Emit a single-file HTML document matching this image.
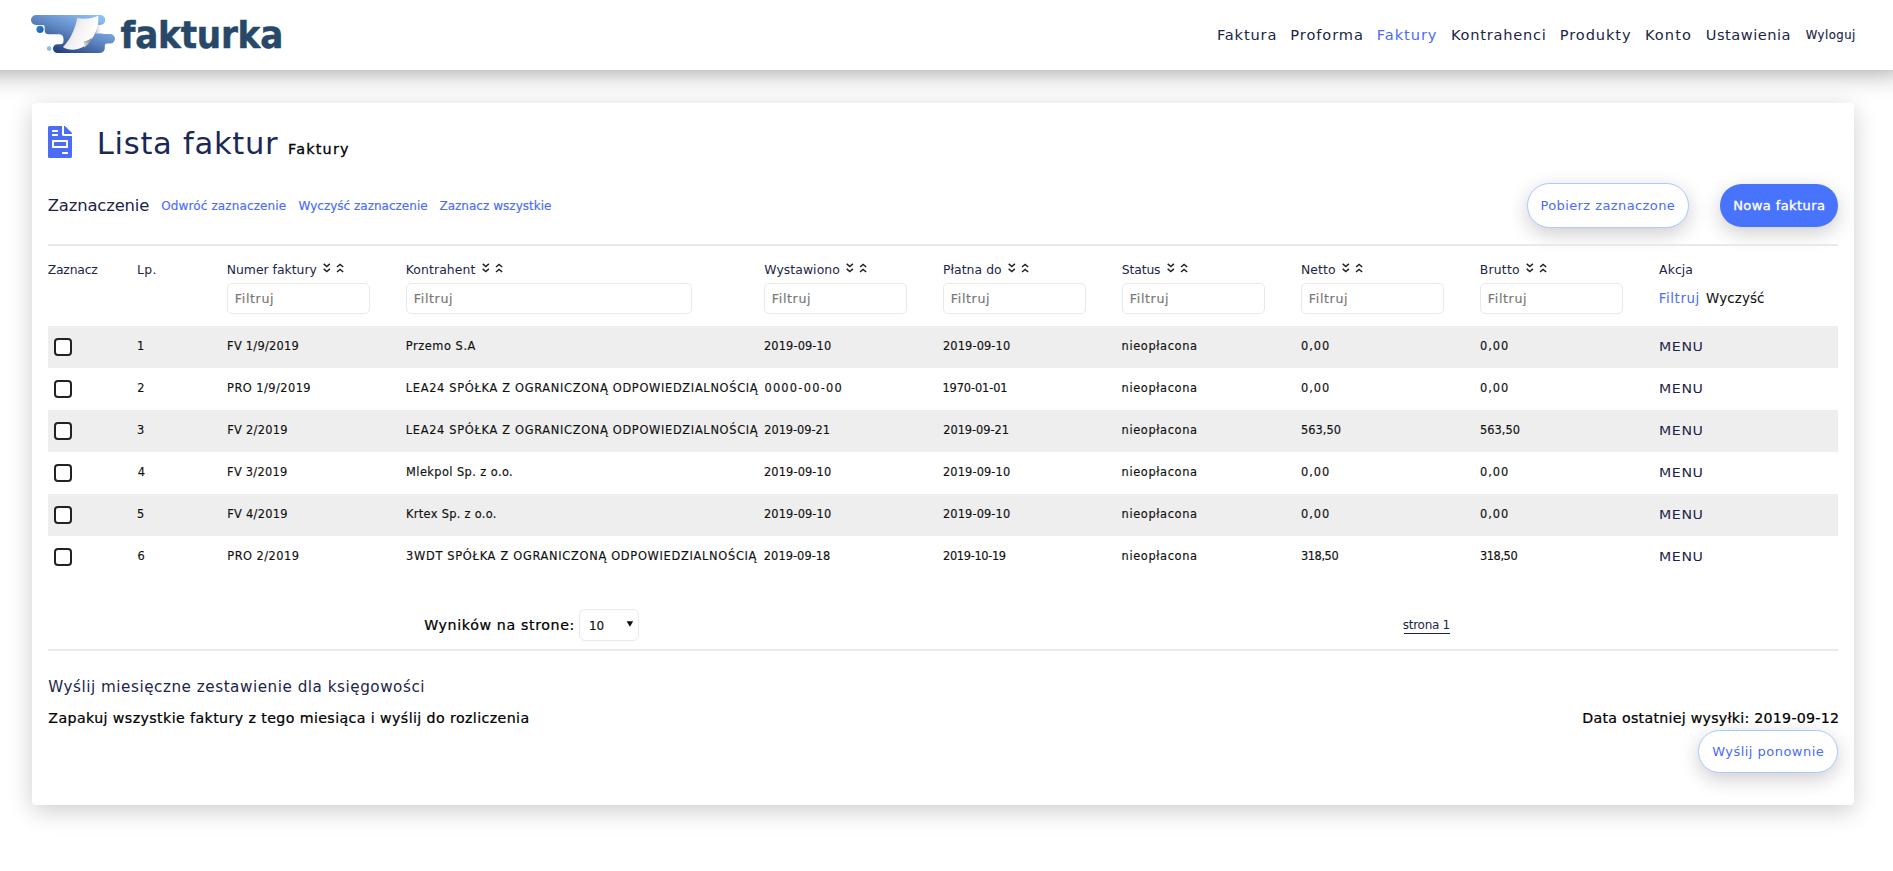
<!DOCTYPE html>
<html lang="pl">
<head>
<meta charset="utf-8">
<title>Fakturka - Lista faktur</title>
<style>
*{box-sizing:border-box}
html,body{margin:0;padding:0}
body{width:1893px;height:871px;overflow:hidden;background:#fff;font-family:"DejaVu Sans","Liberation Sans",sans-serif;color:#111;position:relative}
a{text-decoration:none;color:inherit}
.md{-webkit-text-stroke:0.16px}
.md2{-webkit-text-stroke:0.24px;color:#000}
.hdr{position:absolute;left:-60px;top:0;width:1966px;padding-left:60px;height:70px;background:#fff;box-shadow:0 0 28px rgba(0,0,0,.43);z-index:5}
.logo{position:absolute;left:60px;top:0}
.nav{position:absolute;top:0;left:60px;height:70px;width:1893px}
.nav a{position:absolute;top:26px;font-size:14.6px;line-height:18px;color:#1b2547;white-space:nowrap}
.nav a.act{color:#4a6cf7}
.nav a.sm{font-size:11.7px}
.card{position:absolute;left:32px;top:103px;width:1822px;height:702px;background:#fff;border-radius:4px;box-shadow:0 6px 25px rgba(0,0,0,.2)}
.abs{position:absolute;white-space:nowrap}
.ttl{left:97px;top:124px;font-size:30.6px;line-height:40px;color:#1a2857}
.sub{left:288px;top:139px;font-size:14.4px;line-height:20px;color:#000;-webkit-text-stroke:0.3px}
.zz{left:48px;top:196px;font-size:16.4px;line-height:20px;color:#1b2547}
.lnk{top:198px;font-size:12px;line-height:16px;color:#4a6cf7}
.btn{position:absolute;border-radius:23px;font-size:13px;line-height:16px;text-align:center;white-space:nowrap}
.btn.o{background:#fff;border:1px solid #a9cbfb;color:#4a6cf7;box-shadow:0 6px 20px rgba(0,0,0,.2)}
.btn.p{background:#4873fd;color:#fff;box-shadow:0 6px 20px rgba(0,0,0,.2);-webkit-text-stroke:0.35px}
.hr{position:absolute;left:48px;width:1790px;height:2px;background:#e9e9e9}
table{position:absolute;left:48px;top:246px;width:1790px;border-collapse:collapse;table-layout:fixed}
th{font-weight:normal;text-align:left;padding:0;vertical-align:top;height:80px;font-size:12.4px;color:#1b2547;position:relative}
th .h{position:absolute;left:0;top:16px;line-height:16px;white-space:nowrap}
th .h.a2{top:45px;font-size:13.4px}
th .f{position:absolute;left:0;top:37.3px;height:30.5px;border:1px solid #e9e9e9;border-radius:5px;width:143px;font-size:12.6px;line-height:30.5px;padding-left:7px;color:#777;white-space:nowrap}
td{padding:0 0 2px 0;height:42px;font-size:11.4px;color:#111;white-space:nowrap;overflow:visible;vertical-align:middle;-webkit-text-stroke:0.16px}
td.m{font-size:12.3px;color:#1b2547;-webkit-text-stroke:0;padding:0}
tr.g td{background:#eee}
.cb{display:block;width:18px;height:18px;border:2px solid #222;border-radius:4px;margin:2px 0 0 6px;background:#fff}
svg.ch{vertical-align:1.5px;margin-left:6px}
.pg{left:424px;top:615px;font-size:14.2px;line-height:20px;color:#000}
.sel{left:578.5px;top:608.5px;width:60px;height:32px;border:1px solid #e9e9e9;border-radius:6px;font-size:12px;line-height:33px;padding-left:10.5px;color:#111}
.sel .arr{position:absolute;left:46.5px;top:11.6px}
.str{width:46px;left:1404px;top:617px;font-size:12px;line-height:16px;color:#1b2547;border-bottom:1.3px solid #1b2547;padding-bottom:0}
.s1{left:48px;top:677px;font-size:15.2px;line-height:20px;color:#1b2547}
.s2{left:48px;top:708px;font-size:14.2px;line-height:20px;color:#000}
.s3{right:55px;top:708px;font-size:14.2px;line-height:20px;color:#000}
</style>

</head>
<body>
<div class="hdr">
<svg class="logo" width="300" height="70" viewBox="0 0 300 70">
<defs>
<linearGradient id="bg" gradientUnits="userSpaceOnUse" x1="86" y1="12" x2="70" y2="56"><stop offset="0" stop-color="#8ec1f3"/><stop offset="0.5" stop-color="#5f89c4"/><stop offset="1" stop-color="#27407f"/></linearGradient>
<linearGradient id="pg" gradientUnits="userSpaceOnUse" x1="68" y1="24" x2="92" y2="36"><stop offset="0" stop-color="#cdcdcd"/><stop offset="0.4" stop-color="#f0f0f0"/><stop offset="1" stop-color="#ffffff"/></linearGradient><linearGradient id="cg" gradientUnits="userSpaceOnUse" x1="84" y1="46" x2="91" y2="39"><stop offset="0" stop-color="#e2e2e2"/><stop offset="1" stop-color="#7d7d7d"/></linearGradient><linearGradient id="wg" gradientUnits="userSpaceOnUse" x1="96" y1="0" x2="103" y2="0"><stop offset="0" stop-color="#cfcfcf"/><stop offset="0.6" stop-color="#fafafa"/><stop offset="1" stop-color="#ffffff"/></linearGradient>
<linearGradient id="c1" x1="0" y1="0" x2="1" y2="1"><stop offset="0" stop-color="#3b86d6"/><stop offset="1" stop-color="#0f5cab"/></linearGradient>
</defs>
<path id="blob" fill="url(#bg)" d="M36 15 H100.3 A5 5 0 0 1 100.3 25 H103 V34 H110.2 A4.8 4.8 0 0 1 110.2 43.6 H107.2 A2.4 2.4 0 0 0 104.8 46 V48.3 A4.7 4.7 0 0 1 100.1 53 H57.4 A4.4 4.4 0 0 1 57.4 44.2 H60.2 A3.3 3.3 0 0 0 63.5 40.9 V38.65 A4.4 4.4 0 0 0 59.1 34.2 H48.6 A3.9 3.9 0 0 1 44.7 30.3 V27.2 A2.2 2.2 0 0 0 42.5 25 H36 A5 5 0 0 1 36 15 Z"/>
<circle cx="40" cy="29.300" r="3.600" fill="url(#c1)"/>
<circle cx="49.100" cy="48.600" r="2.300" fill="#86bdf5"/>
<path d="M97 25 L103.500 25 L103.500 33.500 L96 33.500 Z" fill="url(#wg)"/>
<path d="M77.200 18 C85 19.500 92 18.500 98.200 15.800 C99 24 97 32 92 38.500 C88 44 83.500 47.500 78 49 C72 50.500 66.500 49.500 62.900 46.900 C70 40 75 30 77.200 18 Z" fill="url(#pg)"/>
<path d="M83.900 47.500 C84.500 45 84.500 43 83.500 41.500 C87 41 90 39.500 92 37.500 C90 42 87.500 45.500 83.900 47.500 Z" fill="url(#cg)"/>
<text x="120.6" y="48" font-family="DejaVu Sans Condensed, DejaVu Sans, Liberation Sans, sans-serif" font-weight="bold" font-size="38" fill="#274868" stroke="#274868" stroke-width="0.5" stroke-linejoin="round" letter-spacing="-0.2">fakturka</text>
</svg>
<div class="nav"><a class="" style="left:1217px"><span id="t1" style="letter-spacing:0.85px;position:relative;left:-0.1px;">Faktura</span></a><a class="" style="left:1291px"><span id="t2" style="letter-spacing:0.92px;position:relative;left:-0.7px;">Proforma</span></a><a class="act" style="left:1377px"><span id="t3" style="letter-spacing:0.93px;position:relative;left:-0.2px;">Faktury</span></a><a class="" style="left:1451px"><span id="t4" style="letter-spacing:0.76px;position:relative;left:-0.0px;">Kontrahenci</span></a><a class="" style="left:1560px"><span id="t5" style="letter-spacing:0.89px;position:relative;left:-0.2px;">Produkty</span></a><a class="" style="left:1645px"><span id="t6" style="letter-spacing:1.08px;position:relative;left:-0.1px;">Konto</span></a><a class="" style="left:1706px"><span id="t7" style="letter-spacing:0.52px;position:relative;left:-0.3px;">Ustawienia</span></a><a class="sm md" style="left:1805px"><span id="t8" style="letter-spacing:0.47px;position:relative;left:0.8px;">Wyloguj</span></a></div>
</div>
<div class="card"></div>
<svg class="abs" style="left:48px;top:126px" width="24" height="32" viewBox="0 0 384 512"><path fill="#4a6cf7" d="M288 256H96v64h192v-64zm89-151L279.100 7c-4.500-4.500-10.600-7-17-7H256v128h128v-6.100c0-6.300-2.500-12.400-7-16.900zm-153 31V0H24C10.700 0 0 10.700 0 24v464c0 13.300 10.700 24 24 24h336c13.300 0 24-10.700 24-24V160H248c-13.200 0-24-10.800-24-24zM64 72c0-4.420 3.580-8 8-8h80c4.420 0 8 3.580 8 8v16c0 4.420-3.580 8-8 8H72c-4.420 0-8-3.580-8-8V72zm0 64c0-4.420 3.580-8 8-8h80c4.420 0 8 3.580 8 8v16c0 4.420-3.580 8-8 8H72c-4.420 0-8-3.580-8-8v-16zm256 304c0 4.420-3.580 8-8 8h-80c-4.420 0-8-3.580-8-8v-16c0-4.420 3.580-8 8-8h80c4.420 0 8 3.580 8 8v16zm0-200v96c0 8.840-7.160 16-16 16H80c-8.840 0-16-7.160-16-16v-96c0-8.840 7.160-16 16-16h224c8.840 0 16 7.160 16 16z"/></svg>
<div class="abs ttl"><span id="t9" style="letter-spacing:0.70px;position:relative;left:-0.2px;">Lista faktur</span></div>
<div class="abs sub"><span id="t10" style="letter-spacing:1.19px;position:relative;left:0.1px;">Faktury</span></div>
<div class="abs zz"><span id="t11" style="letter-spacing:-0.14px;position:relative;left:-0.3px;">Zaznaczenie</span></div>
<a class="abs lnk md" style="left:161px"><span id="t12" style="letter-spacing:0.12px;position:relative;left:0.3px;">Odwróć zaznaczenie</span></a>
<a class="abs lnk md" style="left:298px"><span id="t13" style="letter-spacing:0.01px;position:relative;left:0.5px;">Wyczyść zaznaczenie</span></a>
<a class="abs lnk md" style="left:439px"><span id="t14" style="letter-spacing:0.03px;position:relative;left:0.4px;">Zaznacz wszystkie</span></a>
<div class="btn o" style="left:1527px;top:183px;width:162px;height:45px;padding-top:14px"><span id="t15" style="letter-spacing:0.41px;position:relative;left:-0.2px;">Pobierz zaznaczone</span></div>
<div class="btn p" style="left:1720px;top:184px;width:118px;height:43px;padding-top:14px"><span id="t16" style="letter-spacing:0.42px;position:relative;left:0.3px;">Nowa faktura</span></div>
<div class="hr" style="top:244px"></div>
<table>
<colgroup><col style="width:5%"><col style="width:5%"><col style="width:10%"><col style="width:20%"><col style="width:10%"><col style="width:10%"><col style="width:10%"><col style="width:10%"><col style="width:10%"><col style="width:10%"></colgroup>
<thead><tr>
<th><span class="h"><span id="t17" style="letter-spacing:-0.22px;position:relative;left:-0.3px;">Zaznacz</span></span></th>
<th><span class="h"><span id="t18" style="letter-spacing:0.35px;position:relative;left:-0.4px;">Lp.</span></span></th>
<th><span class="h"><span id="t19" style="letter-spacing:0.00px;position:relative;left:-0.3px;">Numer faktury</span><svg class="ch" width="22" height="10" viewBox="0 0 22 10"><use href="#chv"/></svg></span><div class="f md" style="width:143px"><span id="t20" style="letter-spacing:0.63px;position:relative;left:-0.2px;">Filtruj</span></div></th>
<th><span class="h"><span id="t21" style="letter-spacing:0.11px;position:relative;left:-0.3px;">Kontrahent</span><svg class="ch" width="22" height="10" viewBox="0 0 22 10"><use href="#chv"/></svg></span><div class="f md" style="width:286px"><span id="t22" style="letter-spacing:0.63px;position:relative;left:-0.2px;">Filtruj</span></div></th>
<th><span class="h"><span id="t23" style="letter-spacing:0.07px;position:relative;left:0.3px;">Wystawiono</span><svg class="ch" width="22" height="10" viewBox="0 0 22 10"><use href="#chv"/></svg></span><div class="f md" style="width:143px"><span id="t24" style="letter-spacing:0.63px;position:relative;left:-0.2px;">Filtruj</span></div></th>
<th><span class="h"><span id="t25" style="letter-spacing:0.06px;position:relative;left:-0.1px;">Płatna do</span><svg class="ch" width="22" height="10" viewBox="0 0 22 10"><use href="#chv"/></svg></span><div class="f md" style="width:143px"><span id="t26" style="letter-spacing:0.63px;position:relative;left:-0.2px;">Filtruj</span></div></th>
<th><span class="h"><span id="t27" style="letter-spacing:-0.15px;position:relative;left:-0.2px;">Status</span><svg class="ch" width="22" height="10" viewBox="0 0 22 10"><use href="#chv"/></svg></span><div class="f md" style="width:143px"><span id="t28" style="letter-spacing:0.63px;position:relative;left:-0.2px;">Filtruj</span></div></th>
<th><span class="h"><span id="t29" style="letter-spacing:0.11px;position:relative;left:-0.1px;">Netto</span><svg class="ch" width="22" height="10" viewBox="0 0 22 10"><use href="#chv"/></svg></span><div class="f md" style="width:143px"><span id="t30" style="letter-spacing:0.63px;position:relative;left:-0.2px;">Filtruj</span></div></th>
<th><span class="h"><span id="t31" style="letter-spacing:0.23px;position:relative;left:-0.3px;">Brutto</span><svg class="ch" width="22" height="10" viewBox="0 0 22 10"><use href="#chv"/></svg></span><div class="f md" style="width:143px"><span id="t32" style="letter-spacing:0.63px;position:relative;left:-0.2px;">Filtruj</span></div></th>
<th><span class="h"><span id="t33" style="letter-spacing:0.09px;position:relative;left:0.1px;">Akcja</span></span><span class="h a2" style="color:#4a6cf7"><span id="t34" style="letter-spacing:0.58px;position:relative;left:-0.3px;">Filtruj</span></span><span class="h a2" style="left:47px;color:#111;-webkit-text-stroke:0.08px"><span id="t35" style="letter-spacing:0.13px;position:relative;left:0.1px;">Wyczyść</span></span></th>
</tr></thead>
<tbody>
<tr class="g"><td><span class="cb"></span></td><td><span id="t36" style="letter-spacing:0.00px;position:relative;left:-0.5px;">1</span></td><td><span id="t37" style="letter-spacing:0.26px;position:relative;left:0.1px;">FV 1/9/2019</span></td><td><span id="t38" style="letter-spacing:0.54px;position:relative;left:-0.2px;">Przemo S.A</span></td><td><span id="t39" style="letter-spacing:0.11px;position:relative;left:-0.0px;">2019-09-10</span></td><td><span id="t40" style="letter-spacing:0.11px;position:relative;left:-0.0px;">2019-09-10</span></td><td><span id="t41" style="letter-spacing:0.61px;position:relative;left:-0.4px;">nieopłacona</span></td><td><span id="t42" style="letter-spacing:0.91px;position:relative;left:0.1px;">0,00</span></td><td><span id="t43" style="letter-spacing:0.91px;position:relative;left:0.1px;">0,00</span></td><td class="m"><span id="t44" style="letter-spacing:0.55px;position:relative;left:0.3px;display:inline-block;transform:scaleX(1.15);transform-origin:0 50%;">MENU</span></td></tr>
<tr><td><span class="cb"></span></td><td><span id="t45" style="letter-spacing:0.00px;position:relative;left:-0.2px;">2</span></td><td><span id="t46" style="letter-spacing:0.45px;position:relative;left:0.1px;">PRO 1/9/2019</span></td><td><span id="t47" style="letter-spacing:0.68px;position:relative;left:-0.2px;">LEA24 SPÓŁKA Z OGRANICZONĄ ODPOWIEDZIALNOŚCIĄ</span></td><td><span id="t48" style="letter-spacing:1.24px;position:relative;left:0.4px;">0000-00-00</span></td><td><span id="t49" style="letter-spacing:-0.11px;position:relative;left:-0.6px;">1970-01-01</span></td><td><span id="t50" style="letter-spacing:0.61px;position:relative;left:-0.4px;">nieopłacona</span></td><td><span id="t51" style="letter-spacing:0.91px;position:relative;left:0.1px;">0,00</span></td><td><span id="t52" style="letter-spacing:0.91px;position:relative;left:0.1px;">0,00</span></td><td class="m"><span id="t53" style="letter-spacing:0.55px;position:relative;left:0.3px;display:inline-block;transform:scaleX(1.15);transform-origin:0 50%;">MENU</span></td></tr>
<tr class="g"><td><span class="cb"></span></td><td><span id="t54" style="letter-spacing:0.00px;position:relative;left:-0.5px;">3</span></td><td><span id="t55" style="letter-spacing:0.27px;position:relative;left:0.3px;">FV 2/2019</span></td><td><span id="t56" style="letter-spacing:0.68px;position:relative;left:-0.2px;">LEA24 SPÓŁKA Z OGRANICZONĄ ODPOWIEDZIALNOŚCIĄ</span></td><td><span id="t57" style="letter-spacing:-0.06px;position:relative;left:0.3px;">2019-09-21</span></td><td><span id="t58" style="letter-spacing:-0.06px;position:relative;left:0.3px;">2019-09-21</span></td><td><span id="t59" style="letter-spacing:0.61px;position:relative;left:-0.4px;">nieopłacona</span></td><td><span id="t60" style="letter-spacing:0.07px;position:relative;left:-0.1px;">563,50</span></td><td><span id="t61" style="letter-spacing:0.07px;position:relative;left:-0.1px;">563,50</span></td><td class="m"><span id="t62" style="letter-spacing:0.55px;position:relative;left:0.3px;display:inline-block;transform:scaleX(1.15);transform-origin:0 50%;">MENU</span></td></tr>
<tr><td><span class="cb"></span></td><td><span id="t63" style="letter-spacing:0.00px;position:relative;left:0.3px;">4</span></td><td><span id="t64" style="letter-spacing:0.26px;position:relative;left:0.1px;">FV 3/2019</span></td><td><span id="t65" style="letter-spacing:0.41px;position:relative;left:0.1px;">Mlekpol Sp. z o.o.</span></td><td><span id="t66" style="letter-spacing:0.11px;position:relative;left:-0.0px;">2019-09-10</span></td><td><span id="t67" style="letter-spacing:0.11px;position:relative;left:-0.0px;">2019-09-10</span></td><td><span id="t68" style="letter-spacing:0.61px;position:relative;left:-0.4px;">nieopłacona</span></td><td><span id="t69" style="letter-spacing:0.91px;position:relative;left:0.1px;">0,00</span></td><td><span id="t70" style="letter-spacing:0.91px;position:relative;left:0.1px;">0,00</span></td><td class="m"><span id="t71" style="letter-spacing:0.55px;position:relative;left:0.3px;display:inline-block;transform:scaleX(1.15);transform-origin:0 50%;">MENU</span></td></tr>
<tr class="g"><td><span class="cb"></span></td><td><span id="t72" style="letter-spacing:0.00px;position:relative;left:-0.4px;">5</span></td><td><span id="t73" style="letter-spacing:0.27px;position:relative;left:0.3px;">FV 4/2019</span></td><td><span id="t74" style="letter-spacing:0.30px;position:relative;left:0.1px;">Krtex Sp. z o.o.</span></td><td><span id="t75" style="letter-spacing:0.11px;position:relative;left:-0.0px;">2019-09-10</span></td><td><span id="t76" style="letter-spacing:0.11px;position:relative;left:-0.0px;">2019-09-10</span></td><td><span id="t77" style="letter-spacing:0.61px;position:relative;left:-0.4px;">nieopłacona</span></td><td><span id="t78" style="letter-spacing:0.91px;position:relative;left:0.1px;">0,00</span></td><td><span id="t79" style="letter-spacing:0.91px;position:relative;left:0.1px;">0,00</span></td><td class="m"><span id="t80" style="letter-spacing:0.55px;position:relative;left:0.3px;display:inline-block;transform:scaleX(1.15);transform-origin:0 50%;">MENU</span></td></tr>
<tr><td><span class="cb"></span></td><td><span id="t81" style="letter-spacing:0.00px;position:relative;left:0.1px;">6</span></td><td><span id="t82" style="letter-spacing:0.47px;position:relative;left:0.3px;">PRO 2/2019</span></td><td><span id="t83" style="letter-spacing:0.70px;">3WDT SPÓŁKA Z OGRANICZONĄ ODPOWIEDZIALNOŚCIĄ</span></td><td><span id="t84" style="letter-spacing:0.04px;position:relative;left:-0.2px;">2019-09-18</span></td><td><span id="t85" style="letter-spacing:-0.36px;position:relative;left:0.1px;">2019-10-19</span></td><td><span id="t86" style="letter-spacing:0.61px;position:relative;left:-0.4px;">nieopłacona</span></td><td><span id="t87" style="letter-spacing:-0.42px;position:relative;left:-0.1px;">318,50</span></td><td><span id="t88" style="letter-spacing:-0.42px;position:relative;left:-0.1px;">318,50</span></td><td class="m"><span id="t89" style="letter-spacing:0.55px;position:relative;left:0.3px;display:inline-block;transform:scaleX(1.15);transform-origin:0 50%;">MENU</span></td></tr>
</tbody>
</table>
<div class="abs pg md2"><span id="t90" style="letter-spacing:0.63px;position:relative;left:0.2px;">Wyników na strone:</span></div>
<div class="abs sel md"><span id="t91" style="letter-spacing:-0.06px;position:relative;left:-1.1px;">10</span><svg class="arr" width="8" height="6" viewBox="0 0 8 6"><path d="M0.6 0.2 H7.2 L3.9 5.8 Z" fill="#111"/></svg></div>
<a class="abs str"><span id="t92" style="letter-spacing:-0.28px;position:relative;left:-1.2px;">strona 1</span></a>
<div class="hr" style="top:649.3px;height:1.4px"></div>
<div class="abs s1"><span id="t93" style="letter-spacing:0.53px;position:relative;left:0.2px;">Wyślij miesięczne zestawienie dla księgowości</span></div>
<div class="abs s2 md2"><span id="t94" style="letter-spacing:0.40px;position:relative;left:0.3px;">Zapakuj wszystkie faktury z tego miesiąca i wyślij do rozliczenia</span></div>
<div class="abs s3 md2"><span id="t95" style="letter-spacing:0.26px;position:relative;left:1.3px;">Data ostatniej wysyłki: 2019-09-12</span></div>
<div class="btn o" style="left:1698px;top:729.5px;width:140px;height:43px;padding-top:13px"><span id="t96" style="letter-spacing:0.47px;position:relative;left:0.2px;">Wyślij ponownie</span></div>
<svg width="0" height="0" style="position:absolute"><defs>
<g id="chv" fill="none" stroke="#222" stroke-width="1.5" stroke-linecap="butt" stroke-linejoin="miter">
<path d="M0.7 0.9 L3.8 3.5 L6.9 0.9 M0.7 5.9 L3.8 8.5 L6.9 5.9"/>
<path d="M14 4 L17.1 1.4 L20.2 4 M14 9 L17.1 6.4 L20.2 9"/>
</g>
</defs></svg>
</body>
</html>
